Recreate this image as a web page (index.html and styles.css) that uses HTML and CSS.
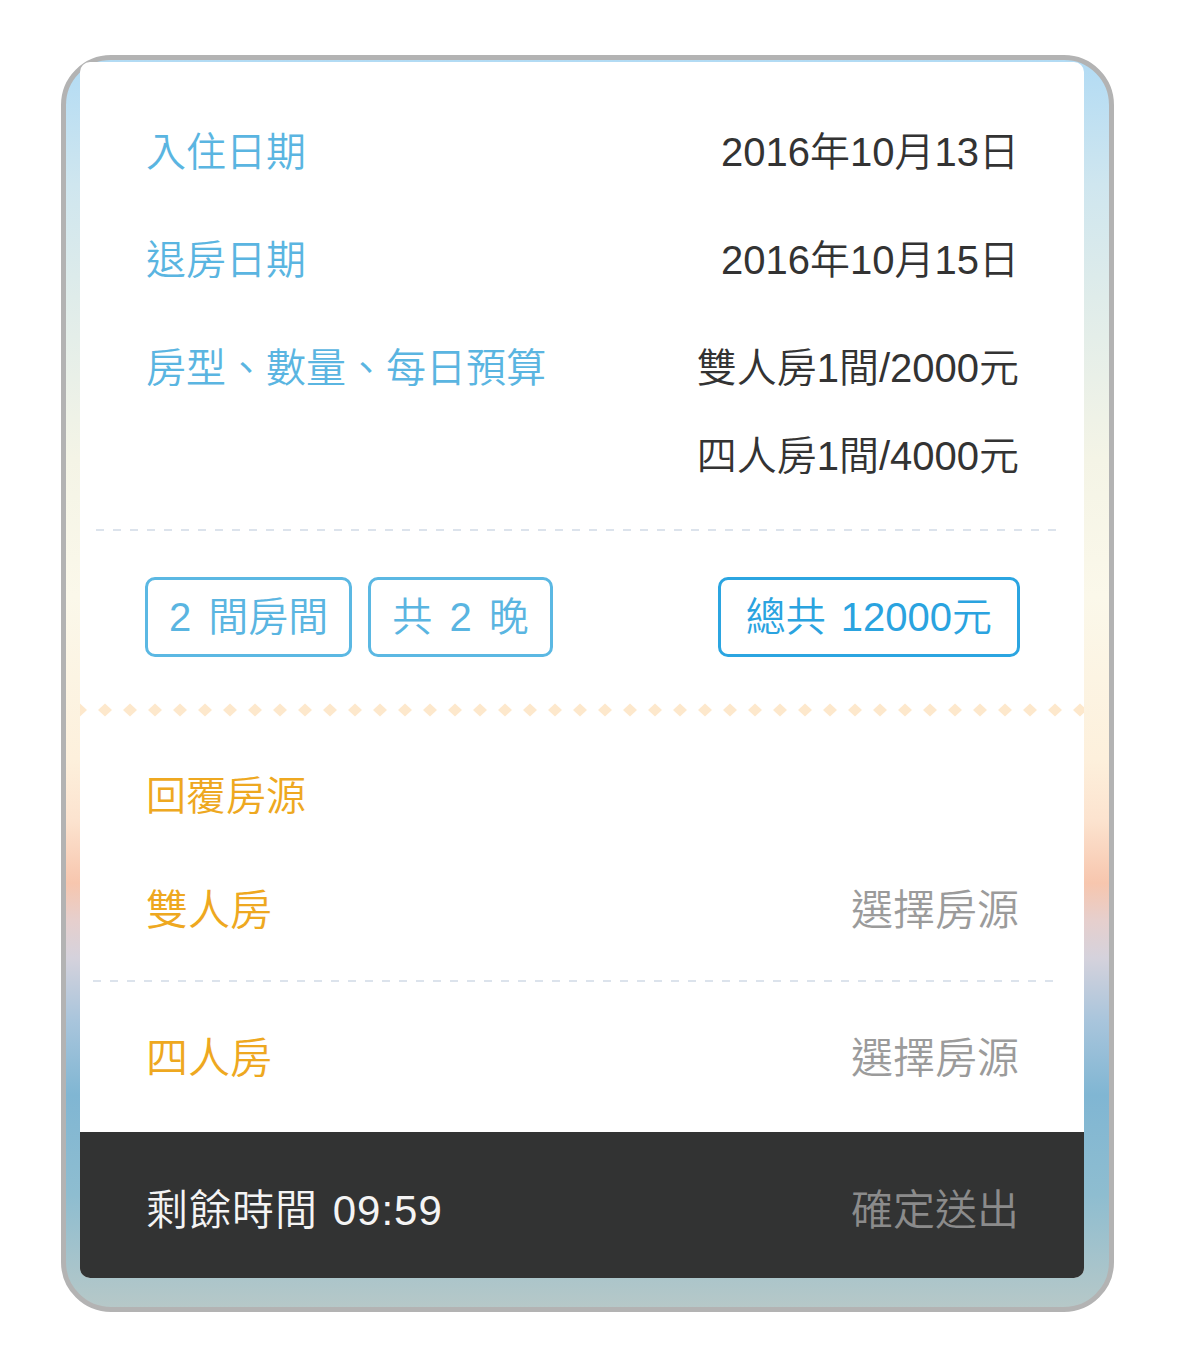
FILE: index.html
```html
<!DOCTYPE html>
<html lang="zh-Hant">
<head>
<meta charset="utf-8">
<title>訂房資訊</title>
<link rel="stylesheet" href="styles.css">
</head>
<body>
<div class="frame">
  <div class="card">
    <section class="info">
      <div class="row">
        <span class="label">入住日期</span>
        <span class="value">2016年10月13日</span>
      </div>
      <div class="row">
        <span class="label">退房日期</span>
        <span class="value">2016年10月15日</span>
      </div>
      <div class="row">
        <span class="label">房型、數量、每日預算</span>
        <div class="values">
          <span class="value">雙人房1間/2000元</span>
          <span class="value sub">四人房1間/4000元</span>
        </div>
      </div>
    </section>
    <div class="dash dash-top"></div>
    <div class="tags">
      <span class="tag">2 間房間</span>
      <span class="tag">共 2 晚</span>
      <span class="tag total">總共 12000元</span>
    </div>
    <svg class="diamonds" width="100%" height="14" aria-hidden="true">
      <defs>
        <pattern id="dia" width="25" height="14" patternUnits="userSpaceOnUse">
          <polygon points="0,0.5 7,7 0,13.5 -7,7" fill="#fde8cc"/>
          <polygon points="25,0.5 32,7 25,13.5 18,7" fill="#fde8cc"/>
        </pattern>
      </defs>
      <rect width="100%" height="14" fill="url(#dia)"/>
    </svg>
    <section class="reply">
      <div class="reply-title">回覆房源</div>
      <div class="room-row first">
        <span class="room">雙人房</span>
        <span class="pick">選擇房源</span>
      </div>
      <div class="dash dash-mid"></div>
      <div class="room-row second">
        <span class="room">四人房</span>
        <span class="pick">選擇房源</span>
      </div>
    </section>
    <footer class="bar">
      <span class="timer">剩餘時間 09:59</span>
      <span class="submit">確定送出</span>
    </footer>
  </div>
</div>
</body>
</html>
```

FILE: styles.css
```css
* { box-sizing: border-box; }

html, body {
  margin: 0;
  padding: 0;
  background: #ffffff;
}

body {
  font-family: "Liberation Sans", "Noto Sans CJK TC", "Noto Sans CJK SC", sans-serif;
  font-weight: 350;
  font-size: 40px;
  padding: 55px 0 0 61px;
}

.frame {
  width: 1053px;
  height: 1257px;
  border: 5px solid #b3b3b3;
  border-radius: 50px;
  padding: 2px 25px 29px 14px;
  background: linear-gradient(to bottom,
    #b2dbf4 0%,
    #cfe6ef 10%,
    #dfecea 19%,
    #f4f4e6 32%,
    #fbf8ea 43%,
    #fdf0dc 56%,
    #fce3cf 61%,
    #f7c6ae 66%,
    #e6cfcd 69%,
    #d5d2dc 72%,
    #a9c5dc 77%,
    #80b6d3 83%,
    #8ebdd0 91%,
    #b6c8c8 100%);
}

.card {
  width: 1004px;
  height: 1216px;
  background: #ffffff;
  border-radius: 10px;
  overflow: hidden;
  display: flex;
  flex-direction: column;
}

.info {
  padding: 36px 65px 0 66px;
}

.row {
  display: flex;
  justify-content: space-between;
  align-items: flex-start;
  line-height: 108px;
}

.label {
  color: #5ab5e1;
}

.value {
  color: #333333;
  white-space: nowrap;
}

.values {
  display: flex;
  flex-direction: column;
  align-items: flex-end;
}

.value.sub {
  line-height: 68px;
}

.dash {
  height: 2px;
  flex: none;
  background: repeating-linear-gradient(to right, #dce3ec 0 8px, transparent 8px 17px);
}

.dash-top {
  margin: 39px 19px 0 16px;
}

.tags {
  display: flex;
  gap: 16px;
  margin: 46px 64px 0 65px;
}

.tag {
  display: inline-flex;
  align-items: center;
  height: 80px;
  line-height: 74px;
  padding: 0 21px;
  border: 3px solid #5bb8e3;
  border-radius: 10px;
  color: #5ab5e1;
  white-space: pre;
  word-spacing: 6px;
}

.tag.total {
  margin-left: auto;
  padding: 0 25px;
  border-color: #2ba5e1;
  color: #2aa3df;
  word-spacing: 4px;
}

.diamonds {
  display: block;
  margin-top: 46px;
  flex: none;
}

.reply {
  flex: 1;
  display: flex;
  flex-direction: column;
}

.reply-title {
  margin-top: 34px;
  padding: 0 65px 0 66px;
  line-height: 90px;
  color: #eea820;
}

.room-row {
  display: flex;
  justify-content: space-between;
  padding: 0 65px 0 66px;
  font-size: 42px;
}

.room-row.first { line-height: 139px; }
.room-row.second { line-height: 147px; padding-top: 3px; }

.room {
  color: #eea820;
}

.pick {
  color: #9b9b9b;
}

.dash-mid {
  margin: 0 23px 0 13px;
}

.bar {
  height: 146px;
  flex: none;
  background: #323333;
  display: flex;
  justify-content: space-between;
  align-items: center;
  padding: 2px 65px 0 66px;
  font-size: 42px;
}

.timer {
  color: #f4f4f4;
  word-spacing: 2px;
  letter-spacing: 1px;
}

.submit {
  color: #8b8b8b;
}
```
